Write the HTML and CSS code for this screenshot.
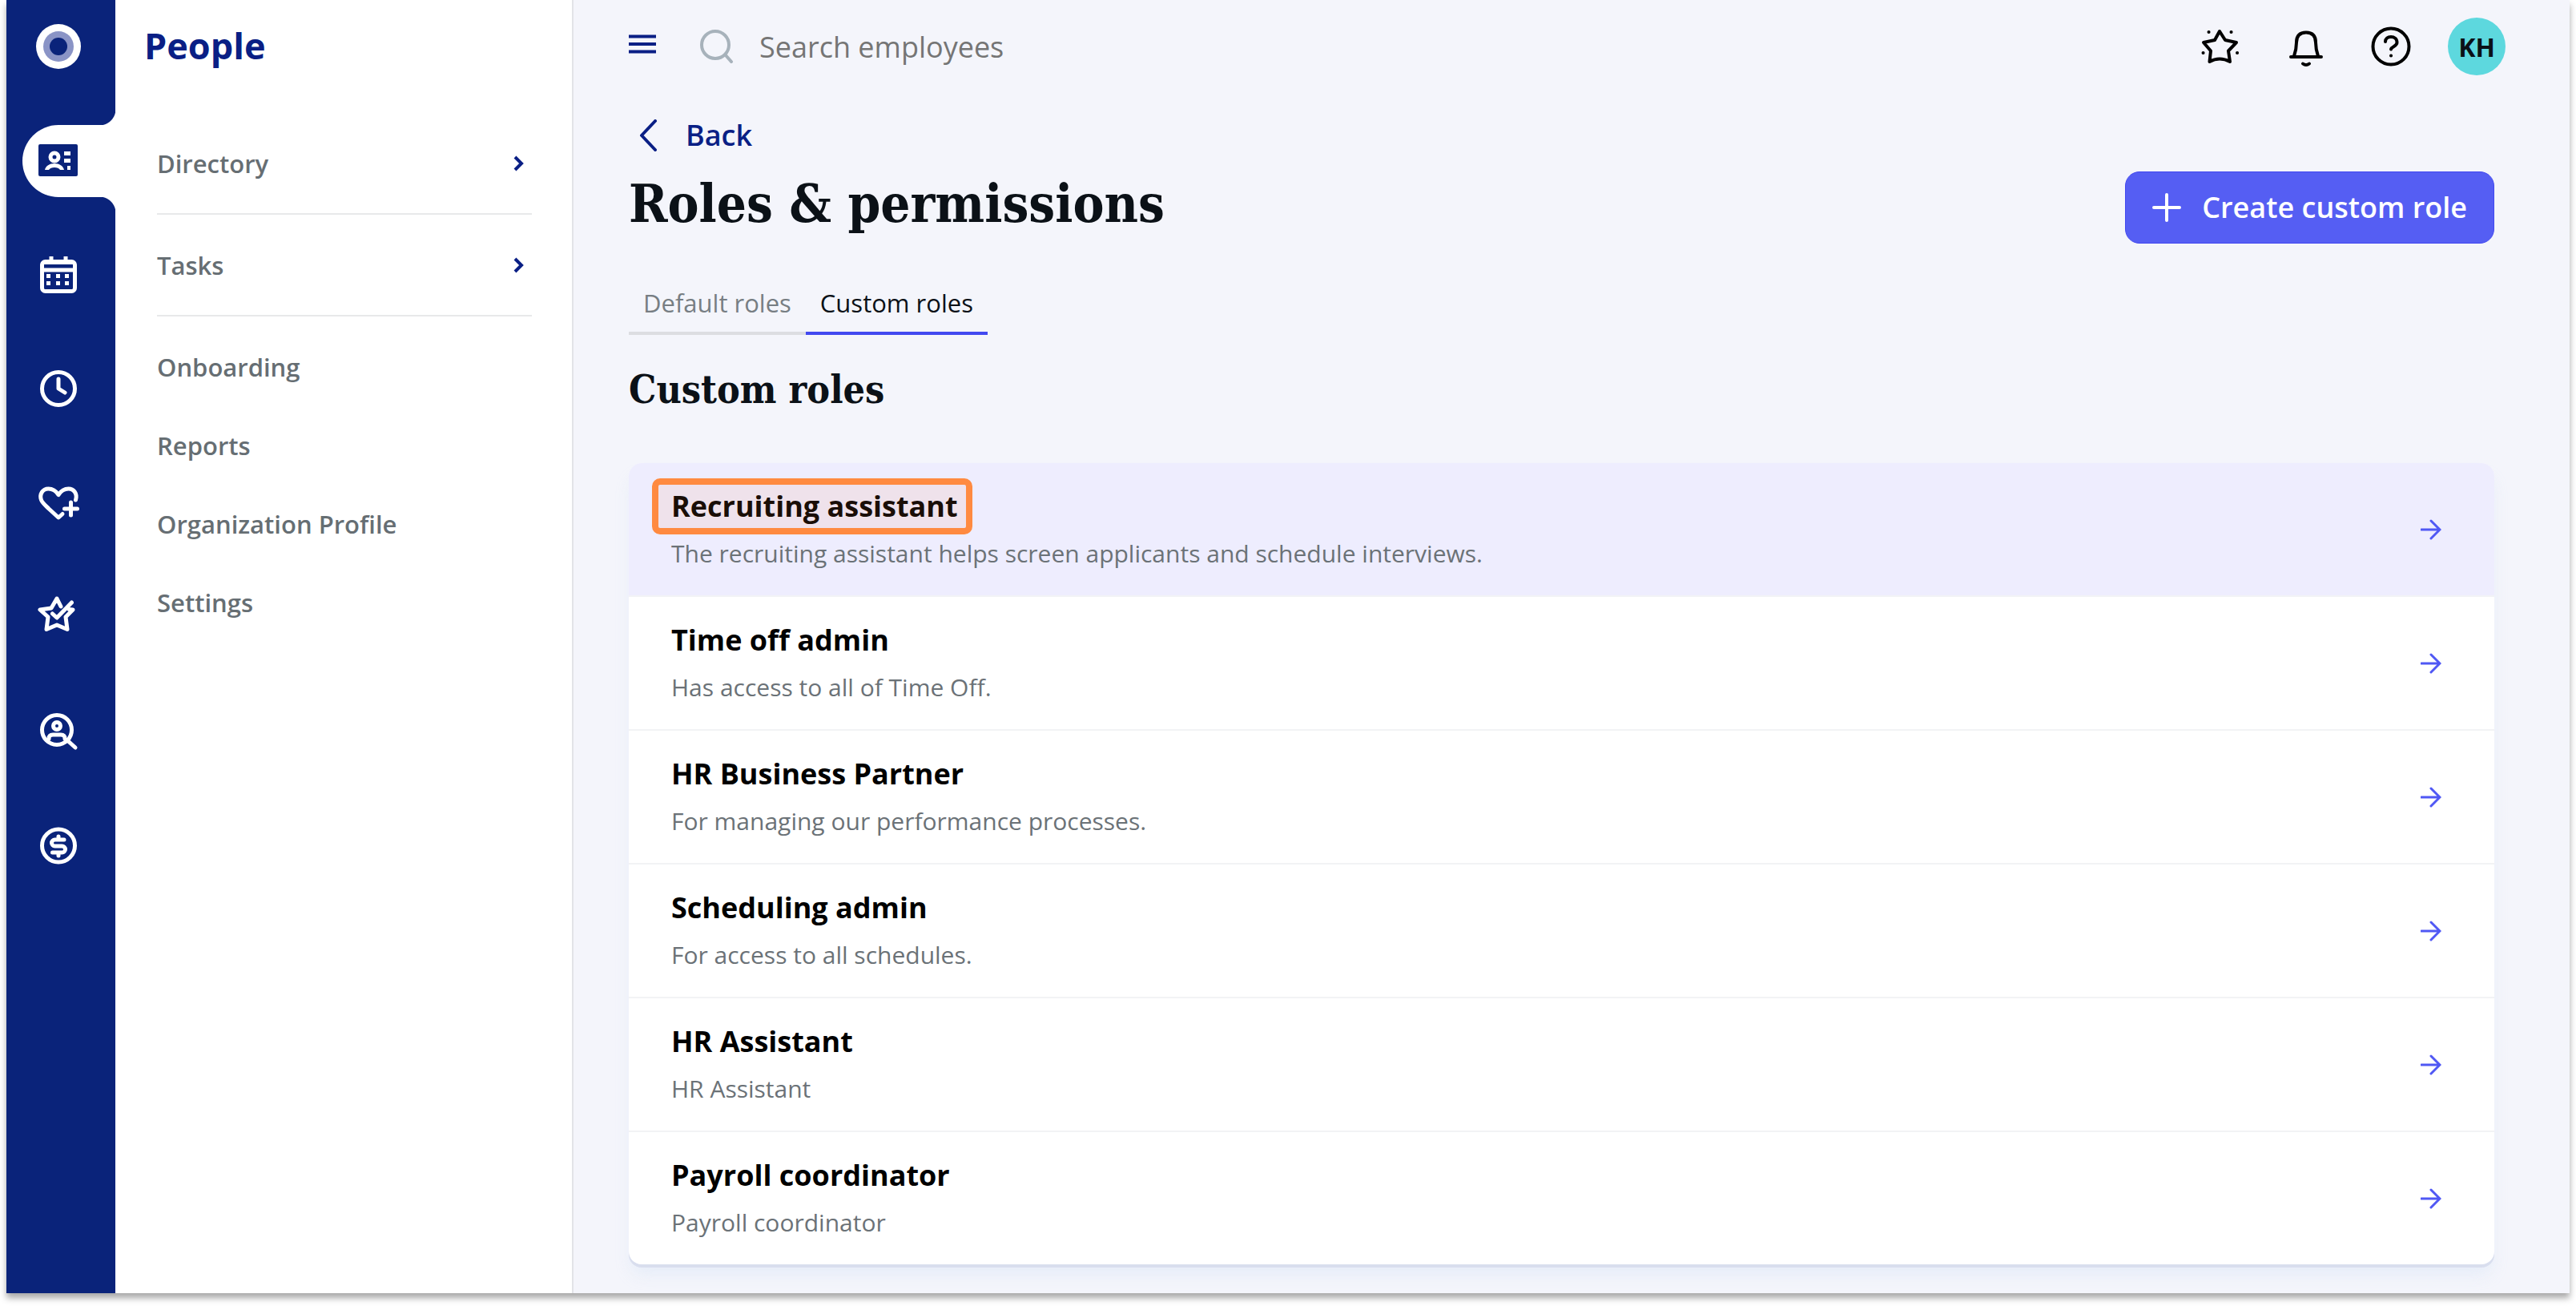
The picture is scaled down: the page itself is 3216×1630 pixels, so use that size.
FILE: index.html
```html
<!DOCTYPE html>
<html lang="en">

<head>
  <meta charset="UTF-8">
  <meta name="viewport" content="width=device-width, initial-scale=1.0">
  <title>Roles &amp; permissions</title>
  <link rel="stylesheet" href="styles.css">
</head>

<body>
  <div class="app">
    <!-- icon rail -->
    <nav class="rail" aria-label="Main">
      <a href="#" class="logo" aria-label="Home">
        <svg width="56" height="56" viewBox="0 0 56 56">
          <circle cx="28" cy="28" r="28" fill="#fff"/>
          <circle cx="28" cy="28" r="19" fill="#8a94c6"/>
          <circle cx="28" cy="28" r="11" fill="#0a237a"/>
        </svg>
      </a>
      <ul class="rail-list">
        <li><a href="#" class="rail-item active" aria-label="People">
          <svg class="icon" viewBox="0 0 50 50">
            <rect x="0" y="4" width="49" height="40" rx="2" fill="#0a237a"/>
            <circle cx="20" cy="20" r="5" fill="none" stroke="#fff" stroke-width="5"/>
            <path d="M8 36c1-5 6-8 12-8s11 3 12 8h-5c-1-2-4-3-7-3s-6 1-7 3z" fill="#fff"/>
            <path d="M32 13h8v5h-8zM32 22h8v5h-8zM36 31h4v5h-4z" fill="#fff"/>
          </svg>
        </a></li>
        <li><a href="#" class="rail-item" aria-label="Calendar">
          <svg class="icon" viewBox="0 0 50 50">
            <rect x="4.500" y="8.500" width="41" height="37" rx="4" fill="none" stroke="#fff" stroke-width="5"/>
            <path d="M16 2v6M34 2v6M5 19h40" fill="none" stroke="#fff" stroke-width="5"/>
            <path d="M5 10h40" stroke="#fff" stroke-width="4"/>
            <path d="M10 24h5v5h-5zM22 24h5v5h-5zM33 24h5v5h-5zM10 33h5v5h-5zM22 33h5v5h-5zM33 33h5v5h-5z" fill="#fff"/>
          </svg>
        </a></li>
        <li><a href="#" class="rail-item" aria-label="Time">
          <svg class="icon line" viewBox="0 0 50 50">
            <circle cx="25" cy="25" r="20.500"/>
            <path d="M25 13v12l8 5"/>
          </svg>
        </a></li>
        <li><a href="#" class="rail-item" aria-label="Benefits">
          <svg class="icon line" viewBox="0 0 50 50">
            <path d="M46.500 22C49 14 44 8 37.500 8C31.500 8 28 11 25 15.500C22 11 18.500 8 12.500 8C5 8 1 15 3.500 22C5 26 9 29 13 33L25 44L30 39.500"/>
            <path d="M40.500 25v16M32.500 33h16"/>
          </svg>
        </a></li>
        <li><a href="#" class="rail-item" aria-label="Performance">
          <svg class="icon line" viewBox="0 0 50 50">
            <path d="M38 16.500L43 17L34 26L36 41.500L23 36L10 41.500L12 26L2 17L16 15L23 3L28 13"/>
            <path d="M17.500 22L23 27L41.500 8"/>
          </svg>
        </a></li>
        <li><a href="#" class="rail-item" aria-label="Recruiting">
          <svg class="icon line" viewBox="0 0 50 50">
            <circle cx="23" cy="25" r="18.500"/>
            <circle cx="23" cy="20" r="4.500"/>
            <path d="M13 36C13 32 15 31 18 31H28C31 31 33 32 33 36M36 38L46 47"/>
          </svg>
        </a></li>
        <li><a href="#" class="rail-item" aria-label="Payroll">
          <svg class="icon line" viewBox="0 0 50 50">
            <circle cx="25" cy="27.500" r="20.500"/>
            <path d="M32 20H20.500a4 4 0 0 0 0 8H29.500a4 4 0 0 1 0 8H17.500M25 16v4M25 36v4"/>
          </svg>
        </a></li>
      </ul>
    </nav>

    <!-- section menu -->
    <aside class="panel">
      <h2 class="panel-title">People</h2>
      <ul class="menu">
        <li class="menu-group"><a href="#">Directory
          <svg class="chevron" viewBox="0 0 14 20"><path d="M3 2l8 8-8 8"/></svg></a></li>
        <li class="menu-group"><a href="#">Tasks
          <svg class="chevron" viewBox="0 0 14 20"><path d="M3 2l8 8-8 8"/></svg></a></li>
      </ul>
      <ul class="menu menu-links">
        <li><a href="#">Onboarding</a></li>
        <li><a href="#">Reports</a></li>
        <li><a href="#">Organization Profile</a></li>
        <li><a href="#">Settings</a></li>
      </ul>
    </aside>

    <main class="main">
      <header class="topbar">
        <button type="button" class="icon-btn" aria-label="Toggle menu">
          <svg width="34" height="24" viewBox="0 0 34 24"><path d="M0 2.500h34M0 12h34M0 21.500h34" stroke="#0a1f85" stroke-width="4"/></svg>
        </button>
        <label for="search" class="search-icon" aria-label="Search employees">
          <svg width="42" height="42" viewBox="0 0 42 42"><g fill="none" stroke="#a7b2bb" stroke-width="4" stroke-linecap="round"><circle cx="19" cy="19" r="17"/><path d="M32 32l7 8"/></g></svg>
        </label>
        <input type="search" id="search" class="search" placeholder="Search employees">
        <div class="actions">
          <button type="button" class="action" aria-label="What's new">
            <svg class="icon dark" viewBox="0 0 50 50">
              <path d="M25 6L32 17L46 20L36 30.500L38 44Q25 37 12.500 44L14 30.500L5 20L19 17Z"/>
              <path d="M11.500 7h.1M39.500 7h.1M4.500 33h.1M47 33h.1"/>
            </svg>
          </button>
          <button type="button" class="action" aria-label="Notifications">
            <svg class="icon dark" viewBox="0 0 50 50">
              <path d="M7 38H45M11 37C13 31 14 26 14 20C14 12 18 7.500 26 7.500S38 12 38 20C38 26 39 31 41 37M22 46.500q4 3 8 0"/>
            </svg>
          </button>
          <button type="button" class="action" aria-label="Help">
            <svg class="icon dark" viewBox="0 0 50 50">
              <circle cx="25" cy="25" r="22.500"/>
              <path d="M18 19C18 15 21 13 25 13C29 13 32.500 15.500 32.500 20C32.500 25 26 24.500 25 28.500M25 36.500h.1"/>
            </svg>
          </button>
          <button type="button" class="avatar">KH</button>
        </div>
      </header>

      <a href="#" class="back">
        <svg width="24" height="40" viewBox="0 0 24 40"><path d="M21 2L4 20l17 18" fill="none" stroke="#0a1f85" stroke-width="4" stroke-linecap="round" stroke-linejoin="round"/></svg>
        Back
      </a>

      <div class="heading">
        <h1>Roles &amp; permissions</h1>
        <button type="button" class="create">
          <svg width="36" height="36" viewBox="0 0 36 36"><path d="M18 2v32M2 18h32" stroke="#fff" stroke-width="4" stroke-linecap="round"/></svg>
          Create custom role
        </button>
      </div>

      <nav class="tabs" aria-label="Role types">
        <a href="#" class="tab">Default roles</a>
        <a href="#" class="tab active" aria-current="page">Custom roles</a>
      </nav>

      <h2 class="subheading">Custom roles</h2>

      <ul class="roles">
        <li><a href="#" class="role selected">
          <span class="role-text">
            <strong class="role-name highlight">Recruiting assistant</strong>
            <span class="role-desc">The recruiting assistant helps screen applicants and schedule interviews.</span>
          </span>
          <svg class="arrow" viewBox="0 0 26 26"><path d="M1 13h22M13 2l11 11-11 11"/></svg>
        </a></li>
        <li><a href="#" class="role">
          <span class="role-text">
            <strong class="role-name">Time off admin</strong>
            <span class="role-desc">Has access to all of Time Off.</span>
          </span>
          <svg class="arrow" viewBox="0 0 26 26"><path d="M1 13h22M13 2l11 11-11 11"/></svg>
        </a></li>
        <li><a href="#" class="role">
          <span class="role-text">
            <strong class="role-name">HR Business Partner</strong>
            <span class="role-desc">For managing our performance processes.</span>
          </span>
          <svg class="arrow" viewBox="0 0 26 26"><path d="M1 13h22M13 2l11 11-11 11"/></svg>
        </a></li>
        <li><a href="#" class="role">
          <span class="role-text">
            <strong class="role-name">Scheduling admin</strong>
            <span class="role-desc">For access to all schedules.</span>
          </span>
          <svg class="arrow" viewBox="0 0 26 26"><path d="M1 13h22M13 2l11 11-11 11"/></svg>
        </a></li>
        <li><a href="#" class="role">
          <span class="role-text">
            <strong class="role-name">HR Assistant</strong>
            <span class="role-desc">HR Assistant</span>
          </span>
          <svg class="arrow" viewBox="0 0 26 26"><path d="M1 13h22M13 2l11 11-11 11"/></svg>
        </a></li>
        <li><a href="#" class="role">
          <span class="role-text">
            <strong class="role-name">Payroll coordinator</strong>
            <span class="role-desc">Payroll coordinator</span>
          </span>
          <svg class="arrow" viewBox="0 0 26 26"><path d="M1 13h22M13 2l11 11-11 11"/></svg>
        </a></li>
      </ul>
    </main>
  </div>
</body>

</html>
```
FILE: styles.css
```css
* {
  box-sizing: border-box;
}

body {
  margin: 0;
  background-color: #fff;
  font-family: 'Open Sans', 'Noto Sans', sans-serif;
  font-size: 31px;
  line-height: 44px;
  color: #0b1117;
}

h1, h2, ul {
  margin: 0;
  padding: 0;
}

ul {
  list-style: none;
}

a {
  color: inherit;
  text-decoration: none;
}

button {
  border: 0;
  padding: 0;
  background: none;
  font-family: inherit;
  cursor: pointer;
}

svg {
  display: block;
  flex-shrink: 0;
}

.app {
  display: flex;
  min-height: calc(100vh - 16px);
  margin: 0 8px 16px;
  box-shadow: 0 6px 8px rgba(0, 0, 0, 0.35);
}

/* icons */

.icon {
  width: 50px;
  height: 50px;
  overflow: visible;
}

.line, .dark {
  fill: none;
  stroke: #fff;
  stroke-width: 5;
  stroke-linecap: round;
  stroke-linejoin: round;
}

.dark {
  stroke: #000;
  stroke-width: 4;
}

/* rail */

.rail {
  flex-shrink: 0;
  width: 136px;
  padding: 30px 0 0 20px;
  background-color: #0a237a;
}

.logo {
  display: block;
  padding-left: 17px;
}

.rail-list {
  display: flex;
  flex-direction: column;
  gap: 52px;
  margin-top: 70px;
}

.rail-item {
  position: relative;
  display: flex;
  align-items: center;
  height: 90px;
  padding-left: 20px;
  border-radius: 45px 0 0 45px;
}

.rail-item.active {
  background-color: #fff;
}

.rail-item.active::before,
.rail-item.active::after {
  content: "";
  position: absolute;
  right: 0;
  width: 20px;
  height: 20px;
}

.rail-item.active::before {
  bottom: 100%;
  background: radial-gradient(circle at 0 0, transparent 20px, #fff 21px);
}

.rail-item.active::after {
  top: 100%;
  background: radial-gradient(circle at 0 100%, transparent 20px, #fff 21px);
}

/* side panel */

.panel {
  flex-shrink: 0;
  width: 572px;
  padding-top: 25px;
  background-color: #fff;
  border-right: 2px solid #e2e3e7;
}

.panel-title {
  padding-left: 36px;
  font-size: 45px;
  line-height: 64px;
  color: #0a1f85;
}

.menu {
  margin-top: 52px;
  padding: 0 50px 0 52px;
  font-weight: 600;
  color: #666e73;
}

.menu-links {
  margin-top: 14px;
}

.menu a {
  display: flex;
  align-items: center;
  justify-content: space-between;
  height: 98px;
}

.menu .menu-group a {
  height: 127px;
  padding-right: 10px;
  border-bottom: 2px solid #e8e9ea;
}

.chevron {
  width: 14px;
  height: 20px;
  fill: none;
  stroke: #0a1f85;
  stroke-width: 4;
}

/* main */

.main {
  flex: 1;
  padding: 0 94px 36px 69px;
  background-color: #f4f5fb;
}

.topbar {
  display: flex;
  align-items: center;
  height: 116px;
  margin-right: -14px;
}

.icon-btn {
  padding-bottom: 6px;
}

.search-icon {
  margin-left: 55px;
}

.search {
  flex: 1;
  margin-left: 32px;
  padding: 2px 0 0;
  border: 0;
  outline: 0;
  background: none;
  font-family: inherit;
  font-size: 36px;
  line-height: 48px;
}

.search::placeholder {
  color: #757575;
}

.actions {
  display: flex;
  gap: 35px;
}

.action {
  display: flex;
  align-items: center;
  justify-content: center;
  width: 72px;
  height: 72px;
}

.avatar {
  width: 72px;
  height: 72px;
  border-radius: 50%;
  background-color: #5dd8de;
  font-size: 32px;
  font-weight: 700;
  color: #0b1117;
}

.back {
  display: flex;
  align-items: center;
  gap: 35px;
  width: fit-content;
  margin-top: 29px;
  padding-left: 12px;
  font-size: 36px;
  font-weight: 600;
  line-height: 48px;
  color: #0a1f85;
}

.heading {
  display: flex;
  align-items: flex-start;
  justify-content: space-between;
  margin-top: 21px;
}

h1, .subheading {
  font-family: 'DejaVu Serif Condensed', 'DejaVu Serif', serif;
  font-weight: 700;
}

h1 {
  font-size: 65px;
  line-height: 80px;
}

.create {
  display: flex;
  align-items: center;
  gap: 26px;
  padding: 20px 33px;
  border: 1px solid #4249f0;
  border-radius: 18px;
  background-color: #555ef3;
  font-size: 36px;
  font-weight: 600;
  line-height: 48px;
  color: #fff;
}

.tabs {
  display: flex;
  margin-top: 38px;
}

.tab {
  padding: 14px 18px;
  border-bottom: 4px solid #dcdde1;
  color: #777e83;
}

.tab.active {
  border-color: #4249f0;
  color: #0b1117;
}

.subheading {
  margin-top: 36px;
  font-size: 48px;
  line-height: 64px;
}

/* role list */

.roles {
  margin-top: 60px;
  border-radius: 16px;
  background-color: #fff;
  box-shadow: 0 4px 0 #d9deee, 0 16px 20px -4px rgba(225, 234, 248, 0.8);
}

.role {
  display: flex;
  align-items: center;
  justify-content: space-between;
  padding: 30px 66px 30px 53px;
}

.roles li + li {
  border-top: 2px solid #f2f3f5;
}

.role.selected {
  border-radius: 16px 16px 0 0;
  background-color: #eeedfe;
}

.role-text {
  display: flex;
  flex-direction: column;
  align-items: flex-start;
  gap: 13px;
}

.role-name {
  position: relative;
  font-size: 36px;
  line-height: 48px;
  color: #000;
}

.role-desc {
  font-size: 30px;
  color: #6b7277;
}

/* callout drawn over the role name */
.highlight::after {
  content: "";
  position: absolute;
  inset: -11px -18px -11px -24px;
  border: 8px solid #ff8a40;
  border-radius: 10px;
  background-color: rgba(255, 138, 64, 0.1);
}

.arrow {
  width: 26px;
  height: 26px;
  fill: none;
  stroke: #5058f4;
  stroke-width: 3;
  stroke-linecap: round;
}
```
